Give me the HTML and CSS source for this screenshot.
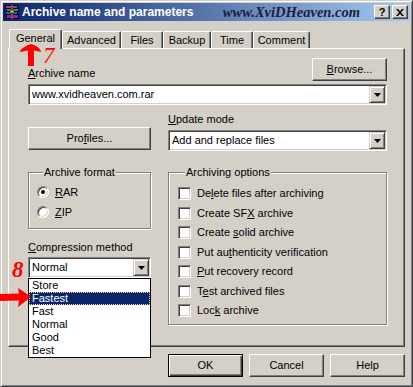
FILE: index.html
```html
<!DOCTYPE html>
<html>
<head>
  <meta charset="UTF-8">
  <title>Archive name and parameters</title>
  <link rel="stylesheet" href="styles.css">
</head>
<body>
  <div class="window">

    <div class="titlebar">
      <svg class="appicon" width="16" height="16" viewBox="0 0 16 16">
        <rect x="1.5" y="1.5" width="12" height="3" fill="#b8309a" stroke="#1a001a"/>
        <rect x="2.5" y="4.5" width="12" height="3" fill="#22a060" stroke="#001a0a"/>
        <rect x="1.5" y="7.5" width="12" height="3" fill="#2c5fe0" stroke="#000a30"/>
        <rect x="2.5" y="10.5" width="12" height="4" fill="#8a2aa8" stroke="#14001e"/>
        <rect x="7" y="1" width="2" height="14" fill="#6b5a3a"/>
        <rect x="6" y="6" width="4" height="3" fill="#d8c070" stroke="#3a2a00" stroke-width="0.8"/>
      </svg>
      <span class="title">Archive name and parameters</span>
      <span class="watermark">www.XviDHeaven.com</span>
      <span class="capbtn capbtn-help">?</span>
      <span class="capbtn">
        <svg width="8" height="7" viewBox="0 0 8 7"><path d="M0 0h2l2 2.2 2-2.2h2L5 3.5 8 7H6L4 4.8 2 7H0l3-3.5z" fill="#000"/></svg>
      </span>
    </div>

    <div class="tabs">
      <div class="tab tab-general active">General</div>
      <div class="tab tab-advanced">Advanced</div>
      <div class="tab tab-files">Files</div>
      <div class="tab tab-backup">Backup</div>
      <div class="tab tab-time">Time</div>
      <div class="tab tab-comment">Comment</div>
    </div>

    <div class="panel">
      <div class="content">

        <div class="row-name">
          <span class="label"><u>A</u>rchive name</span>
          <span class="btn"><u>B</u>rowse...</span>
        </div>
        <div class="combo combo-name">
          <span class="combo-text">www.xvidheaven.com.rar</span>
          <span class="drop"><svg width="7" height="4"><polygon points="0,0 7,0 3.5,4" fill="#000"/></svg></span>
        </div>

        <div class="cols">
          <div class="col-left">
            <span class="btn btn-wide">Pro<u>f</u>iles...</span>

            <fieldset class="group group-format">
              <legend>Archive format</legend>
              <div class="opt"><span class="radio checked"></span><span><u>R</u>AR</span></div>
              <div class="opt"><span class="radio"></span><span><u>Z</u>IP</span></div>
            </fieldset>

            <div class="label label-method"><u>C</u>ompression method</div>
            <div class="combo-wrap">
              <div class="combo">
                <span class="combo-text">Normal</span>
                <span class="drop"><svg width="7" height="4"><polygon points="0,0 7,0 3.5,4" fill="#000"/></svg></span>
              </div>
              <ul class="droplist">
                <li>Store</li>
                <li class="selected">Fastest</li>
                <li>Fast</li>
                <li>Normal</li>
                <li>Good</li>
                <li>Best</li>
              </ul>
            </div>
          </div>

          <div class="col-right">
            <div class="label"><u>U</u>pdate mode</div>
            <div class="combo combo-update">
              <span class="combo-text">Add and replace files</span>
              <span class="drop"><svg width="7" height="4"><polygon points="0,0 7,0 3.5,4" fill="#000"/></svg></span>
            </div>

            <fieldset class="group group-options">
              <legend>Archiving options</legend>
              <div class="check"><span class="box"></span><span>De<u>l</u>ete files after archiving</span></div>
              <div class="check"><span class="box"></span><span>Create SF<u>X</u> archive</span></div>
              <div class="check"><span class="box"></span><span>Create <u>s</u>olid archive</span></div>
              <div class="check"><span class="box"></span><span>Put au<u>t</u>henticity verification</span></div>
              <div class="check"><span class="box"></span><span><u>P</u>ut recovery record</span></div>
              <div class="check"><span class="box"></span><span>T<u>e</u>st archived files</span></div>
              <div class="check"><span class="box"></span><span>Loc<u>k</u> archive</span></div>
            </fieldset>
          </div>
        </div>

      </div>
    </div>

    <div class="actions">
      <span class="btn btn-default">OK</span>
      <span class="btn">Cancel</span>
      <span class="btn">Help</span>
    </div>

    <!-- red notes drawn over the dialog -->
    <svg class="arrow arrow-up" width="22" height="23" viewBox="0 0 22 23">
      <path d="M0 7 C3 3 7 1 11 0 C15 1 19 3 21 7 L21 8 L14 6.5 L14 22 L8 22 L8 6.5 L0 8 Z" fill="#f00"/>
    </svg>
    <span class="mark mark-7">7</span>
    <span class="mark mark-8">8</span>
    <svg class="arrow arrow-right" width="32" height="20" viewBox="0 0 32 20">
      <path d="M0 6 L19 5.5 L18 0 C23 3 27 6 31 9 C27 12 23 15 18 19 L19 12.5 L0 13 Z" fill="#f00"/>
    </svg>

  </div>
</body>
</html>
```

FILE: styles.css
```css
body {
  margin: 0;
  font-family: "Liberation Sans", Arial, sans-serif;
  font-size: 11px;
  line-height: 13px;
  color: #000;
  background: #d4d0c8;
}
u {
  text-decoration: underline;
  text-underline-offset: 1px;
}

.window {
  position: relative;
  width: 413px;
  height: 387px;
  box-sizing: border-box;
  padding: 2px;
  background: #d4d0c8;
  border: 1px solid;
  border-color: #d4d0c8 #404040 #404040 #d4d0c8;
  box-shadow: inset 1px 1px #fff, inset -1px -1px #808080;
}

/* title bar */
.titlebar {
  display: flex;
  align-items: center;
  height: 18px;
  padding: 0 2px 0 1px;
  background: linear-gradient(to right, #0a246a, #a6caf0);
}
.appicon {
  display: block;
}
.title {
  margin-left: 2px;
  color: #fff;
  font-weight: bold;
  font-size: 12px;
}
.watermark {
  margin-left: auto;
  margin-right: 14px;
  font-family: "Liberation Serif", "Times New Roman", serif;
  font-style: italic;
  font-weight: bold;
  font-size: 14.5px;
  color: #1c1c40;
}
.capbtn {
  display: flex;
  align-items: center;
  justify-content: center;
  width: 16px;
  height: 14px;
  box-sizing: border-box;
  background: #d4d0c8;
  border: 1px solid;
  border-color: #fff #404040 #404040 #fff;
  box-shadow: inset -1px -1px #808080;
  font-weight: bold;
  font-size: 11px;
}
.capbtn + .capbtn {
  margin-left: 2px;
}

/* tabs */
.tabs {
  position: relative;
  z-index: 1;
  display: flex;
  align-items: flex-end;
  height: 19px;
  margin-top: 8px;
  padding-left: 6px;
}
.tab {
  box-sizing: border-box;
  height: 17px;
  padding-top: 2px;
  text-align: center;
  background: #d4d0c8;
  border: 1px solid;
  border-bottom: 0;
  border-color: #fff #404040 #fff #fff;
  box-shadow: inset -1px 0 #808080;
  border-radius: 2px 2px 0 0;
}
.tab.active {
  height: 20px;
  margin-bottom: -1px;
}
.tab-general { width: 53px; }
.tab-advanced { width: 59px; }
.tab-files { width: 42px; }
.tab-backup { width: 48px; }
.tab-time { width: 42px; }
.tab-comment { width: 57px; }

.panel {
  width: 397px;
  height: 299px;
  box-sizing: border-box;
  margin-left: 5px;
  padding: 9px 0 0 19px;
  border: 1px solid;
  border-color: #fff #404040 #404040 #fff;
  box-shadow: inset -1px -1px #808080;
}
.content {
  width: 359px;
}

/* controls */
.row-name {
  display: flex;
  justify-content: space-between;
  height: 23px;
}
.row-name .label {
  align-self: flex-end;
  margin-bottom: 1px;
}
.btn {
  display: flex;
  align-items: center;
  justify-content: center;
  width: 75px;
  height: 23px;
  box-sizing: border-box;
  background: #d4d0c8;
  border: 1px solid;
  border-color: #fff #404040 #404040 #fff;
  box-shadow: inset -1px -1px #808080;
}
.btn-wide {
  width: 123px;
}
.btn-default {
  border-color: #000;
  box-shadow: inset 1px 1px #fff, inset -1px -1px #404040, inset -2px -2px #808080;
}

.combo {
  display: flex;
  height: 21px;
  box-sizing: border-box;
  padding: 1px;
  background: #fff;
  border: 1px solid;
  border-color: #808080 #fff #fff #808080;
  box-shadow: inset 1px 1px #404040, inset -1px -1px #d4d0c8;
}
.combo-name {
  margin-top: 3px;
}
.combo-update {
  margin-top: 4px;
}
.combo-text {
  flex: 1;
  padding-left: 2px;
  line-height: 17px;
}
.drop {
  display: flex;
  align-items: center;
  justify-content: center;
  width: 16px;
  height: 17px;
  box-sizing: border-box;
  background: #d4d0c8;
  border: 1px solid;
  border-color: #d4d0c8 #404040 #404040 #d4d0c8;
  box-shadow: inset 1px 1px #fff, inset -1px -1px #808080;
}
.drop svg {
  display: block;
}

.cols {
  display: grid;
  grid-template-columns: 123px 219px;
  column-gap: 17px;
  align-items: start;
  margin-top: 8px;
}
.col-left {
  padding-top: 14px;
}

.group {
  margin: 16px 0 0;
  border: 1px solid #808080;
  box-shadow: inset 1px 1px #fff, 1px 1px #fff;
}
.group legend {
  padding: 0 1px;
  background: #d4d0c8;
}
.group-format {
  padding: 3px 0 6px 8px;
}
.group-format legend {
  margin-left: 6px;
}
.group-options {
  margin-top: 15px;
  padding: 5px 0 4px 9px;
}
.group-options legend {
  margin-left: 7px;
}

.opt {
  display: flex;
  align-items: center;
  height: 20px;
}
.radio {
  position: relative;
  width: 12px;
  height: 12px;
  box-sizing: border-box;
  margin-right: 6px;
  border-radius: 50%;
  background: #fff;
  border: 1px solid;
  border-color: #808080 #fff #fff #808080;
  box-shadow: inset 1px 1px #404040, inset -1px -1px #d4d0c8;
}
.radio.checked::after {
  content: "";
  position: absolute;
  left: 3px;
  top: 3px;
  width: 4px;
  height: 4px;
  border-radius: 50%;
  background: #000;
}

.check {
  display: flex;
  align-items: center;
  height: 19px;
}
.check:nth-child(odd) {
  height: 20px;
}
.box {
  width: 13px;
  height: 13px;
  box-sizing: border-box;
  margin-right: 6px;
  background: #fff;
  border: 1px solid;
  border-color: #808080 #fff #fff #808080;
  box-shadow: inset 1px 1px #404040, inset -1px -1px #d4d0c8;
}

.label-method {
  margin-top: 12px;
}
.combo-wrap {
  position: relative;
  margin-top: 3px;
}
.droplist {
  position: absolute;
  z-index: 5;
  top: 100%;
  left: 0;
  width: 123px;
  box-sizing: border-box;
  margin: 0;
  padding: 0;
  list-style: none;
  background: #fff;
  border: 1px solid #000;
}
.droplist li {
  height: 13px;
  padding-left: 3px;
}
.droplist .selected {
  background: #0a246a;
  color: #fff;
  outline: 1px dotted #f2dc9a;
  outline-offset: -1px;
}

.actions {
  display: flex;
  justify-content: flex-end;
  gap: 6px;
  margin-top: 7px;
  padding-right: 5px;
}

/* annotations */
.arrow {
  position: absolute;
  z-index: 10;
}
.arrow-up {
  left: 19px;
  top: 43px;
}
.arrow-right {
  left: -1px;
  top: 287px;
}
.mark {
  position: absolute;
  z-index: 10;
  color: #f00;
  font-family: "Liberation Serif", "Times New Roman", serif;
  font-style: italic;
  font-size: 23px;
  line-height: 16px;
}
.mark-7 {
  left: 42px;
  top: 47px;
}
.mark-8 {
  left: 11px;
  top: 261px;
  font-weight: bold;
}
```
